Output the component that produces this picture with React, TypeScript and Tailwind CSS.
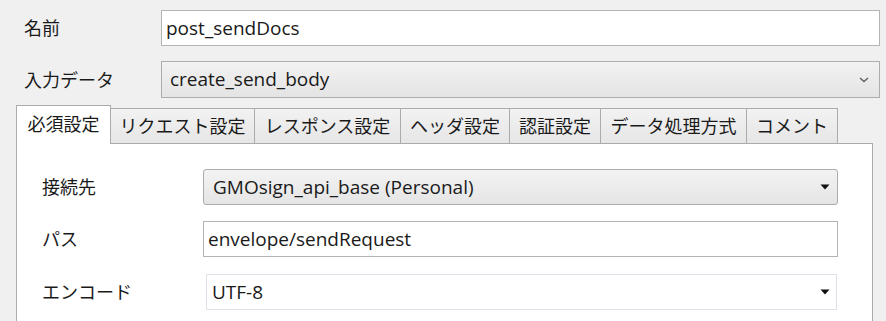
import React from "react";

const tabs: { label: string; w: number; active?: boolean }[] = [
  { label: "必須設定", w: 95, active: true },
  { label: "リクエスト設定", w: 144 },
  { label: "レスポンス設定", w: 146 },
  { label: "ヘッダ設定", w: 109 },
  { label: "認証設定", w: 91 },
  { label: "データ処理方式", w: 146 },
  { label: "コメント", w: 91 },
];

function Triangle() {
  return (
    <svg width="10" height="6" viewBox="0 0 10 6" className="shrink-0">
      <path d="M0.5 0.5 L9.5 0.5 L5 5.5 Z" fill="#111" />
    </svg>
  );
}

export default function App() {
  return (
    <div className="w-[886px] h-[321px] overflow-hidden bg-[#f0f0f0] text-[18px] leading-none text-[#1a1a1a] font-['Open_Sans','Noto_Sans_CJK_JP',sans-serif]">
      <div className="pt-[10px]">
        <div className="flex items-center h-[36px]">
          <div className="w-[161px] pl-[24px]">名前</div>
          <div className="flex-1 mr-[6px] h-full flex items-center bg-white border border-[#b3b3b3] pl-[4px] text-[19px]">
            post_sendDocs
          </div>
        </div>
        <div className="flex items-center h-[37px] mt-[15px]">
          <div className="w-[161px] pl-[24px]">入力データ</div>
          <div className="flex-1 mr-[6px] h-full flex items-center justify-between bg-linear-to-b from-[#f2f2f2] to-[#e4e4e4] border border-[#adadad] pl-[8px] pr-[10px]">
            <span className="text-[19px]">create_send_body</span>
            <svg width="10" height="6" viewBox="0 0 10 6">
              <path d="M1 1 L5 4.5 L9 1" fill="none" stroke="#606060" strokeWidth="1.4" />
            </svg>
          </div>
        </div>
        <div className="flex items-end h-[38px] mt-[7px] pl-[16px]">
          {tabs.map((t) => (
            <div
              key={t.label}
              style={{ width: t.w }}
              className={
                t.active
                  ? "relative z-10 -mb-px h-[39px] bg-white border border-b-0 border-[#ababab] flex items-center justify-center pb-[3px]"
                  : "h-[35px] bg-linear-to-b from-[#f2f2f2] to-[#e6e6e6] border-t border-r border-[#ababab] flex items-center justify-center"
              }
            >
              {t.label}
            </div>
          ))}
        </div>
        <div className="ml-[16px] w-[857px] h-[200px] bg-white border border-[#ababab] pt-[25px] pr-[34px]">
          <div className="flex items-center h-[36px]">
            <div className="w-[186px] pl-[25px]">接続先</div>
            <div className="flex-1 h-full flex items-center justify-between rounded-[3px] bg-linear-to-b from-[#f3f3f3] to-[#e5e5e5] border border-[#acacac] pl-[9px] pr-[7px]">
              <span className="text-[19px]">GMOsign_api_base (Personal)</span>
              <Triangle />
            </div>
          </div>
          <div className="flex items-center h-[36px] mt-[16px]">
            <div className="w-[186px] pl-[25px]">パス</div>
            <div className="flex-1 h-full flex items-center bg-white border border-[#b3b3b3] pl-[4px] text-[19px]">
              envelope/sendRequest
            </div>
          </div>
          <div className="flex items-center h-[36px] mt-[17px]">
            <div className="w-[186px] pl-[25px]">エンコード</div>
            <div className="flex-1 h-full ml-[3px] mr-[1px] flex items-center justify-between bg-white border border-[#dde2e8] pl-[5px] pr-[6px]">
              <span className="text-[19px]">UTF-8</span>
              <Triangle />
            </div>
          </div>
        </div>
      </div>
    </div>
  );
}
